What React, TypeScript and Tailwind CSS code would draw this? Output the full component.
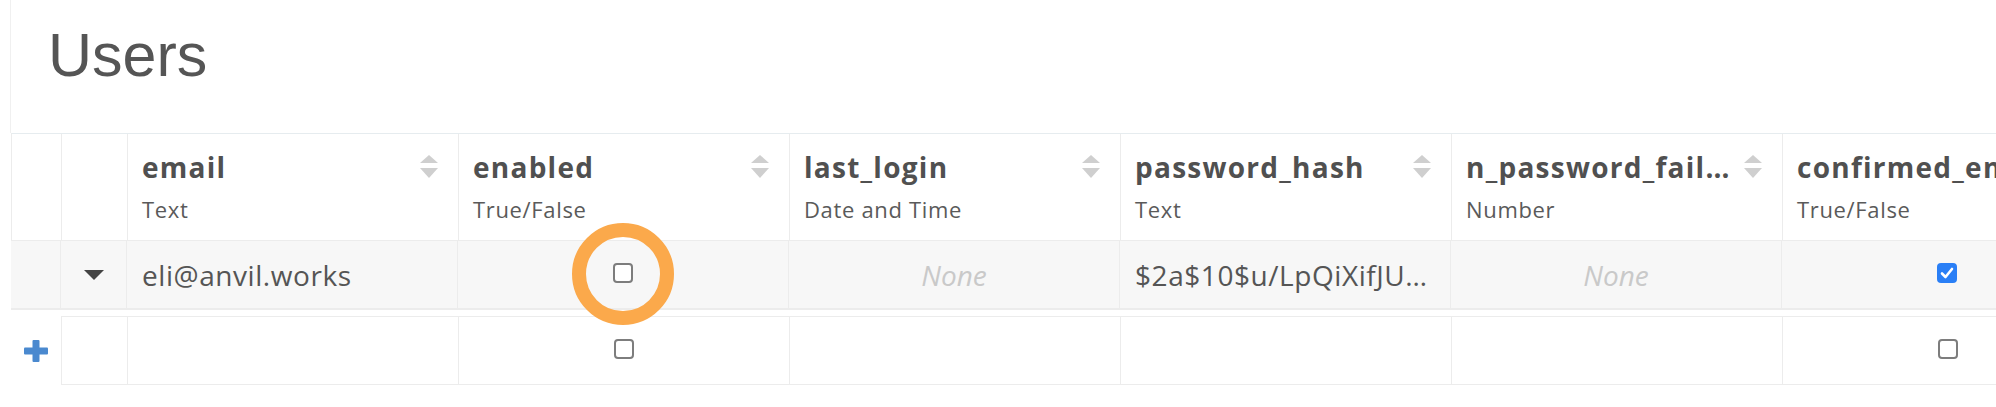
import React from 'react';

const columns = [
  { name: 'email', type: 'Text' },
  { name: 'enabled', type: 'True/False' },
  { name: 'last_login', type: 'Date and Time' },
  { name: 'password_hash', type: 'Text' },
  { name: 'n_password_failures', type: 'Number' },
  { name: 'confirmed_email', type: 'True/False' },
];

const SortArrows = () => (
  <svg width="18" height="23" viewBox="0 0 18 23" className="mt-[6px] shrink-0">
    <path d="M9 0 L18 8 L0 8 Z" fill="#cfcfcf" />
    <path d="M0 13 L18 13 L9 23 Z" fill="#cfcfcf" />
  </svg>
);

const Checkbox = ({ checked }: { checked?: boolean }) =>
  checked ? (
    <div className="mb-1 flex h-[20px] w-[20px] items-center justify-center rounded-[4px] bg-[#2a7ff6]">
      <svg width="14" height="12" viewBox="0 0 14 12">
        <path d="M2 6.5 L5.5 10 L12 2" fill="none" stroke="#fff" strokeWidth="2.6" strokeLinecap="round" strokeLinejoin="round" />
      </svg>
    </div>
  ) : (
    <div className="mb-1 h-[20px] w-[20px] rounded-[4px] border-2 border-[#7d7d7d] bg-white" />
  );

const None = () => (
  <span className="text-[28px] italic text-[#c9c9c9] [font-family:'Open_Sans',sans-serif]">None</span>
);

export default function App() {
  return (
    <div className="h-[407px] w-[1996px] overflow-hidden bg-white text-[#555] [font-family:'Open_Sans',sans-serif]">
      {/* Title */}
      <div className="ml-[10px] h-[133px] border-l border-[#f0f0f0] pl-[37px] pt-[25px]">
        <h1 className="text-[61px] leading-[60px] text-[#555] [font-family:'Liberation_Sans',Arial,sans-serif]">Users</h1>
      </div>

      <div className="ml-[11px] w-[2200px]">
        {/* Header */}
        <div className="flex h-[108px] border-y border-l border-t-[#e6ecef] border-b-[#ececec] border-l-[#ececec]">
          <div className="w-[50px] shrink-0 border-r border-[#ececec]" />
          <div className="w-[66px] shrink-0 border-r border-[#ececec]" />
          {columns.map((col) => (
            <div key={col.name} className="w-[331px] shrink-0 border-r border-[#ececec] pl-[14px] pr-[20px] pt-[15px]">
              <div className="flex items-start justify-between gap-2">
                <div className="min-w-0 truncate text-[28px] font-bold leading-[36px] tracking-[0.045em] text-[#505050]">{col.name}</div>
                <SortArrows />
              </div>
              <div className="mt-[10px] text-[22px] leading-[28px] tracking-[0.03em] text-[#5a5a5a]">{col.type}</div>
            </div>
          ))}
        </div>

        {/* Existing row */}
        <div className="flex h-[69px] border-b-2 border-[#ececec] bg-[#f7f7f7]">
          <div className="w-[50px] shrink-0 border-r border-[#ececec]" />
          <div className="flex w-[66px] shrink-0 items-center justify-center border-r border-[#ececec]">
            <svg width="20" height="10" viewBox="0 0 20 10">
              <path d="M0 0 L20 0 L10 10 Z" fill="#444" />
            </svg>
          </div>
          <div className="flex w-[331px] shrink-0 items-center border-r border-[#ececec] pl-[15px] pr-[15px]">
            <span className="truncate text-[28px] leading-[36px] tracking-[0.02em]">eli@anvil.works</span>
          </div>
          <div className="relative flex w-[331px] shrink-0 items-center justify-center border-r border-[#ececec]">
            <Checkbox />
            <div className="absolute left-1/2 top-[calc(50%-1px)] h-[102px] w-[102px] -translate-x-1/2 -translate-y-1/2 rounded-full border-[14px] border-[#fba94b]" />
          </div>
          <div className="flex w-[331px] shrink-0 items-center justify-center border-r border-[#ececec]">
            <None />
          </div>
          <div className="flex w-[331px] shrink-0 items-center border-r border-[#ececec] pl-[15px] pr-[15px]">
            <span className="truncate text-[28px] leading-[36px] tracking-[0.02em]">$2a$10$u/LpQiXifJUTdNZkvM3yJeO</span>
          </div>
          <div className="flex w-[331px] shrink-0 items-center justify-center border-r border-[#ececec]">
            <None />
          </div>
          <div className="flex w-[331px] shrink-0 items-center justify-center border-r border-[#ececec]">
            <Checkbox checked />
          </div>
        </div>

        {/* New row */}
        <div className="mt-[6px] flex h-[69px]">
          <div className="flex w-[50px] shrink-0 items-center justify-center">
            <svg width="24" height="22" viewBox="0 0 24 22">
              <rect x="8.5" y="0" width="7" height="22" rx="1" fill="#4a89cf" />
              <rect x="0" y="7.5" width="24" height="7" rx="1" fill="#4a89cf" />
            </svg>
          </div>
          <div className="flex border-y border-l border-[#ececec]">
            <div className="w-[66px] shrink-0 border-r border-[#ececec]" />
            <div className="w-[331px] shrink-0 border-r border-[#ececec]" />
            <div className="flex w-[331px] shrink-0 items-center justify-center border-r border-[#ececec]">
              <Checkbox />
            </div>
            <div className="w-[331px] shrink-0 border-r border-[#ececec]" />
            <div className="w-[331px] shrink-0 border-r border-[#ececec]" />
            <div className="w-[331px] shrink-0 border-r border-[#ececec]" />
            <div className="flex w-[331px] shrink-0 items-center justify-center border-r border-[#ececec]">
              <Checkbox />
            </div>
          </div>
        </div>
      </div>
    </div>
  );
}
